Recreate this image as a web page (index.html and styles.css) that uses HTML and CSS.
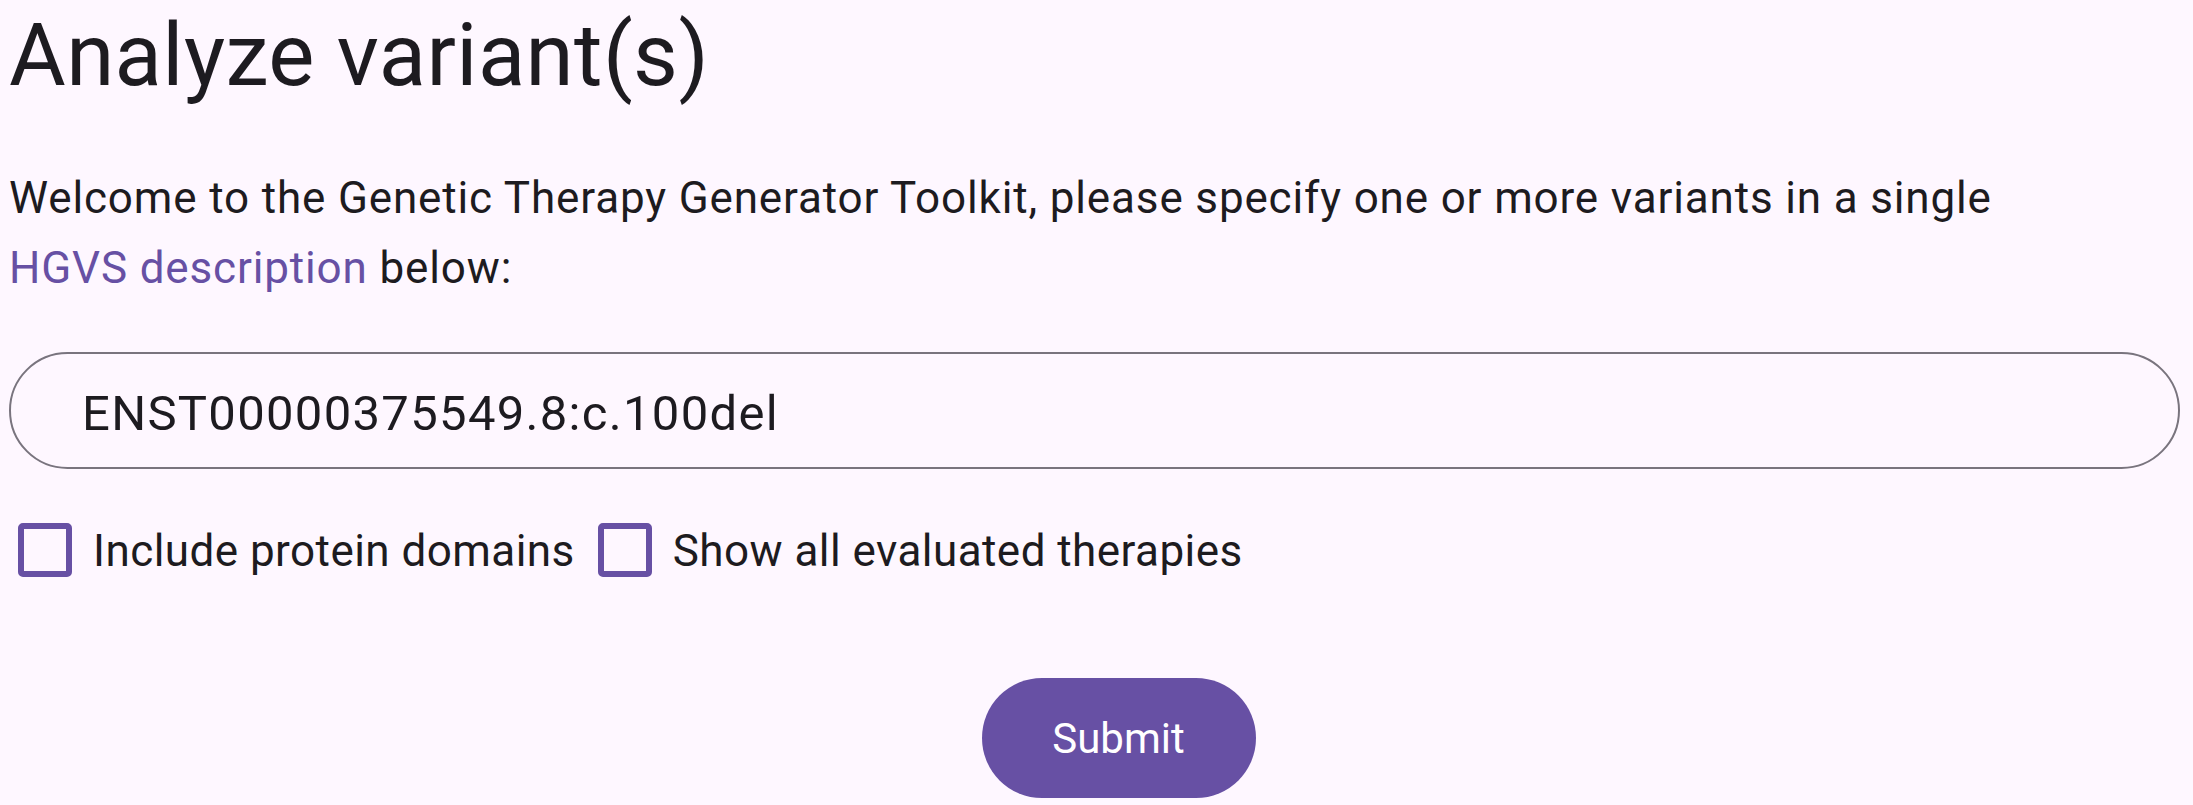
FILE: index.html
```html
<!DOCTYPE html>
<html lang="en">
<head>
    <meta charset="UTF-8">
    <meta name="viewport" content="width=device-width, initial-scale=1.0">
    <title>Genetic Therapy Generator Toolkit - Analyze</title>
    <link rel="stylesheet" href="styles.css">
</head>
<body>
    <main class="page">
        <h1 class="page-title">Analyze variant(s)</h1>

        <p class="intro">
            Welcome to the Genetic Therapy Generator Toolkit, please specify one or more variants in a single
            <a class="intro-link" href="#">HGVS description</a> below:
        </p>

        <form class="variant-form" onsubmit="return false;">
            <input class="variant-input" type="text" name="variant" value="ENST00000375549.8:c.100del">

            <div class="options">
                <label class="option">
                    <input type="checkbox" name="domains" hidden>
                    <span class="option-box"></span>
                    <span class="option-label">Include protein domains</span>
                </label>
                <label class="option">
                    <input type="checkbox" name="all" hidden>
                    <span class="option-box"></span>
                    <span class="option-label">Show all evaluated therapies</span>
                </label>
            </div>

            <div class="actions">
                <button class="btn-submit" type="submit">Submit</button>
            </div>
        </form>
    </main>
</body>
</html>
```

FILE: styles.css
```css
:root {
    --primary: #6750A4;
    --surface: #FEF7FF;
    --on-surface: #1D1B20;
    --outline: #79747E;
}

* {
    margin: 0;
    padding: 0;
    box-sizing: border-box;
    font-family: Roboto, 'Noto Sans', sans-serif;
}

body {
    background-color: var(--surface);
    color: var(--on-surface);
}

.page {
    padding: 1px 13px 0 9px;
}

.page-title {
    font-size: 87px;
    line-height: 109px;
    font-weight: 400;
    letter-spacing: 0.4px;
}

.intro {
    margin-top: 54px;
    font-size: 44px;
    line-height: 69.5px;
    letter-spacing: 0.85px;
}

.intro-link {
    color: var(--primary);
    text-decoration: none;
    white-space: nowrap;
}

.variant-form {
    margin-top: 49px;
}

.variant-input {
    display: block;
    width: 100%;
    height: 117px;
    padding: 5px 71px 0;
    border: 2.5px solid var(--outline);
    border-radius: 60px;
    background: transparent;
    color: var(--on-surface);
    font-size: 49px;
    letter-spacing: 1.3px;
    outline: none;
}

.options {
    display: flex;
    align-items: center;
    gap: 5px;
    margin-top: 53px;
}

.option {
    display: flex;
    align-items: center;
    gap: 21px;
    padding: 0 9px;
    cursor: pointer;
}

.option-box {
    width: 54px;
    height: 54px;
    border: 6px solid var(--primary);
    border-radius: 5px;
    flex-shrink: 0;
}

.option-label {
    padding-top: 3px;
    font-size: 44px;
    letter-spacing: 0.45px;
}

.actions {
    display: flex;
    justify-content: center;
    padding-left: 48px;
    margin-top: 101px;
}

.btn-submit {
    width: 274px;
    height: 120px;
    border: none;
    border-radius: 60px;
    background-color: var(--primary);
    color: white;
    font-size: 42px;
    cursor: pointer;
}
```
